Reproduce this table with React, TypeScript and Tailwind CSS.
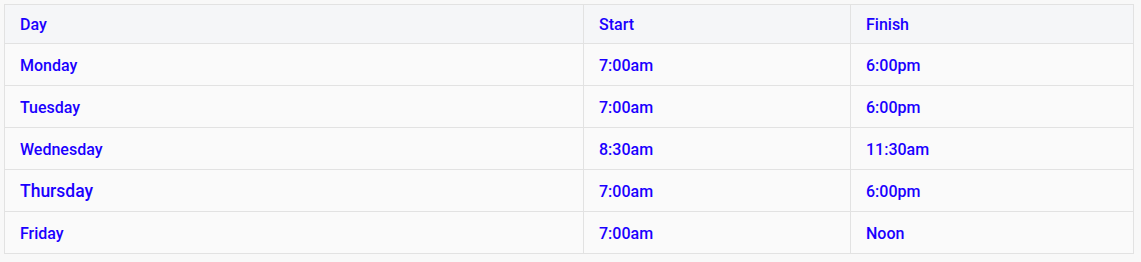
import React from 'react';

const rows = [
  { day: 'Monday', start: '7:00am', finish: '6:00pm' },
  { day: 'Tuesday', start: '7:00am', finish: '6:00pm' },
  { day: 'Wednesday', start: '8:30am', finish: '11:30am' },
  { day: 'Thursday', start: '7:00am', finish: '6:00pm', big: true },
  { day: 'Friday', start: '7:00am', finish: 'Noon' },
];

export default function App() {
  return (
    <div className="min-h-screen bg-[#f8f8f8] p-[4px] font-['Roboto',sans-serif] text-[#1a00ff]">
      <table className="w-[1130px] border-collapse border border-[#e2e2e2] bg-[#fafafa] text-left">
        <thead>
          <tr className="h-[39px] bg-[#f5f6f8]">
            <th className="w-[579px] border border-[#e2e2e2] px-[15px] pt-[1px] text-[16px] font-medium">Day</th>
            <th className="w-[267px] border border-[#e2e2e2] px-[15px] pt-[1px] text-[16px] font-medium">Start</th>
            <th className="border border-[#e2e2e2] px-[15px] pt-[1px] text-[16px] font-medium">Finish</th>
          </tr>
        </thead>
        <tbody>
          {rows.map((r) => (
            <tr key={r.day} className="h-[42px]">
              <td
                className={
                  r.big
                    ? 'border border-[#e2e2e2] px-[15px] pt-[2px] text-[17.5px] font-medium'
                    : 'border border-[#e2e2e2] px-[15px] pt-[2px] text-[16px] font-medium'
                }
              >
                {r.day}
              </td>
              <td className="border border-[#e2e2e2] px-[15px] pt-[2px] text-[16px] font-medium">{r.start}</td>
              <td className="border border-[#e2e2e2] px-[15px] pt-[2px] text-[16px] font-medium">{r.finish}</td>
            </tr>
          ))}
        </tbody>
      </table>
    </div>
  );
}
